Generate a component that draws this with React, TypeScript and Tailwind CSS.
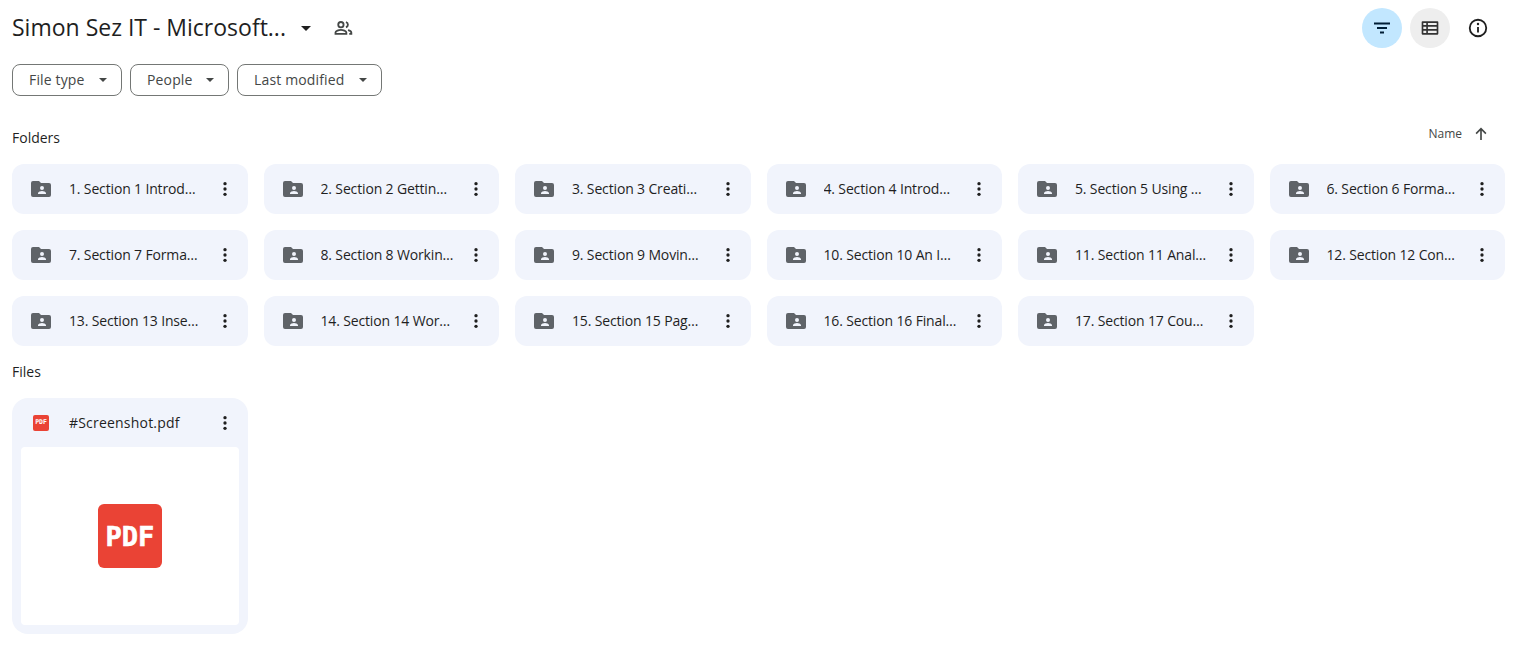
import React from "react";

const folders = [
  "1. Section 1 Introduction",
  "2. Section 2 Getting Started",
  "3. Section 3 Creating a Workbook",
  "4. Section 4 Introduction to Formulas",
  "5. Section 5 Using Functions",
  "6. Section 6 Formatting Cells",
  "7. Section 7 Formatting Data",
  "8. Section 8 Working with Tables",
  "9. Section 9 Moving and Copying",
  "10. Section 10 An Introduction",
  "11. Section 11 Analyzing Data",
  "12. Section 12 Conditional Format",
  "13. Section 13 Inserting Objects",
  "14. Section 14 Working with Sheets",
  "15. Section 15 Page Layout",
  "16. Section 16 Finalizing Workbooks",
  "17. Section 17 Course Close",
];

function Caret({ className }: { className?: string }) {
  return (
    <svg viewBox="0 0 10 5" className={className} fill="currentColor">
      <path d="M0 0l5 5 5-5z" />
    </svg>
  );
}

function Dots() {
  return (
    <svg viewBox="0 0 24 24" className="w-5 h-5 text-[#1f1f1f] shrink-0" fill="currentColor">
      <circle cx="12" cy="5.6" r="2" />
      <circle cx="12" cy="12" r="2" />
      <circle cx="12" cy="18.4" r="2" />
    </svg>
  );
}

function FolderIcon() {
  return (
    <svg viewBox="0 0 20 16" className="w-5 h-4 text-[#5f6368] shrink-0" fill="currentColor">
      <path
        fillRule="evenodd"
        d="M2 0h6l2 2h8a2 2 0 0 1 2 2v10a2 2 0 0 1-2 2H2a2 2 0 0 1-2-2V2a2 2 0 0 1 2-2zM13 7a2 2 0 1 0-4 0 2 2 0 0 0 4 0zM7 12.2V13h8v-.8c0-1.4-2.700-2.200-4-2.200s-4 .8-4 2.200z"
      />
    </svg>
  );
}

function Chip({ label, w }: { label: string; w: string }) {
  return (
    <button className={`h-8 ${w} rounded-lg border border-[#747775] flex items-center pl-4 text-sm tracking-[0.15px] text-[#444746]`}>
      <span>{label}</span>
      <span className="flex-1" />
      <Caret className="w-2 h-1 mr-[14px] text-[#444746]" />
    </button>
  );
}

function FolderCard({ name }: { name: string }) {
  return (
    <div className="h-[50px] rounded-xl bg-[#f1f4fc] flex items-center pl-[19px] pr-[13px]">
      <FolderIcon />
      <span className="ml-[18px] flex-1 min-w-0 truncate text-sm tracking-[-0.15px] text-[#1f1f1f] pr-3">{name}</span>
      <Dots />
    </div>
  );
}

export default function App() {
  return (
    <div
      className="w-[1522px] h-[665px] overflow-hidden bg-white flex flex-col pl-3 pr-[17px] pt-2 text-[#1f1f1f]"
      style={{ fontFamily: '"Open Sans", "Noto Sans", sans-serif' }}
    >
      <div className="h-10 flex items-center pr-[7px]">
        <h1 className="text-[23px] leading-[30px] mb-[2px] text-[#1f1f1f] w-[277px] whitespace-nowrap">Simon Sez IT - Microsoft...</h1>
        <Caret className="ml-[12px] w-[10px] h-[5px] text-[#1f1f1f]" />
        <svg viewBox="0 0 24 24" className="ml-[22px] w-5 h-5 text-[#444746]" fill="none" stroke="currentColor" strokeWidth="2.2">
          <circle cx="9.500" cy="8" r="3.200" />
          <path d="M3 19v-1.500c0-2 4-3.200 6.500-3.200s6.500 1.200 6.500 3.200V19z" />
          <path d="M15.500 4.900a3.200 3.200 0 0 1 0 6.200M18 14.600c2.200.5 4 1.500 4 3V19h-2.500" />
        </svg>
        <span className="flex-1" />
        <button className="w-10 h-10 rounded-full bg-[#c2e7ff] flex items-center justify-center">
          <svg viewBox="0 0 24 24" className="w-6 h-6 text-[#001d35]" fill="currentColor">
            <path d="M4 6.500h16v2H4zM7 11h10v2H7zM10 15.500h4v2h-4z" />
          </svg>
        </button>
        <button className="ml-2 w-10 h-10 rounded-full bg-[#eeeeee] flex items-center justify-center">
          <svg viewBox="0 0 24 24" className="w-5 h-5 text-[#333333]" fill="currentColor">
            <path
              fillRule="evenodd"
              d="M3 4h18a1 1 0 0 1 1 1v14a1 1 0 0 1-1 1H3a1 1 0 0 1-1-1V5a1 1 0 0 1 1-1zm1 4.500h3.500V6H4zm5.500 0H20V6H9.500zM4 13.200h3.500v-2.700H4zm5.500 0H20v-2.700H9.500zM4 18h3.500v-2.800H4zm5.500 0H20v-2.800H9.500z"
            />
          </svg>
        </button>
        <button className="ml-2 w-10 h-10 rounded-full flex items-center justify-center">
          <svg viewBox="0 0 24 24" className="w-[22px] h-[22px] text-[#1f1f1f]" fill="none" stroke="currentColor" strokeWidth="2">
            <circle cx="12" cy="12" r="9" />
            <path d="M12 11v6" />
            <circle cx="12" cy="7.700" r="1.300" fill="currentColor" stroke="none" />
          </svg>
        </button>
      </div>

      <div className="mt-4 flex gap-2">
        <Chip label="File type" w="w-[110px]" />
        <Chip label="People" w="w-[99px]" />
        <Chip label="Last modified" w="w-[145px]" />
      </div>

      <div className="mt-[26px] h-8 flex items-center justify-between">
        <span className="text-sm text-[#1f1f1f]">Folders</span>
        <div className="flex items-center mb-2 pr-[15px]">
          <span className="text-xs text-[#444746]">Name</span>
          <svg viewBox="0 0 24 24" className="ml-[10px] w-[18px] h-[18px] text-[#444746]" fill="none" stroke="currentColor" strokeWidth="2.2">
            <path d="M12 20V5M5.500 11.500 12 5l6.500 6.500" />
          </svg>
        </div>
      </div>

      <div className="mt-[10px] grid grid-cols-6 gap-4">
        {folders.map((f) => (
          <FolderCard key={f} name={f} />
        ))}
      </div>

      <div className="mt-4 h-[20px] flex items-center text-sm text-[#1f1f1f]">Files</div>

      <div className="mt-4 w-[236px] h-[236px] rounded-2xl bg-[#f1f4fc] flex flex-col px-[9px] pb-[9px]">
        <div className="h-[49px] flex items-center pl-[12px] pr-[4px]">
          <div className="w-4 h-4 rounded-[2px] bg-[#ea4335] flex items-center justify-center text-[6.500px] font-bold leading-none text-white font-['DejaVu_Sans_Mono']">
            PDF
          </div>
          <span className="ml-[20px] flex-1 truncate text-sm tracking-[0.2px] text-[#1f1f1f]">#Screenshot.pdf</span>
          <Dots />
        </div>
        <div className="flex-1 rounded-[4px] bg-white flex items-center justify-center">
          <div className="w-16 h-16 rounded-[6px] bg-[#ea4335] flex items-center justify-center text-[27px] font-bold leading-none text-white font-['DejaVu_Sans_Mono'] [-webkit-text-stroke:0.6px_white]">
            PDF
          </div>
        </div>
      </div>
    </div>
  );
}
